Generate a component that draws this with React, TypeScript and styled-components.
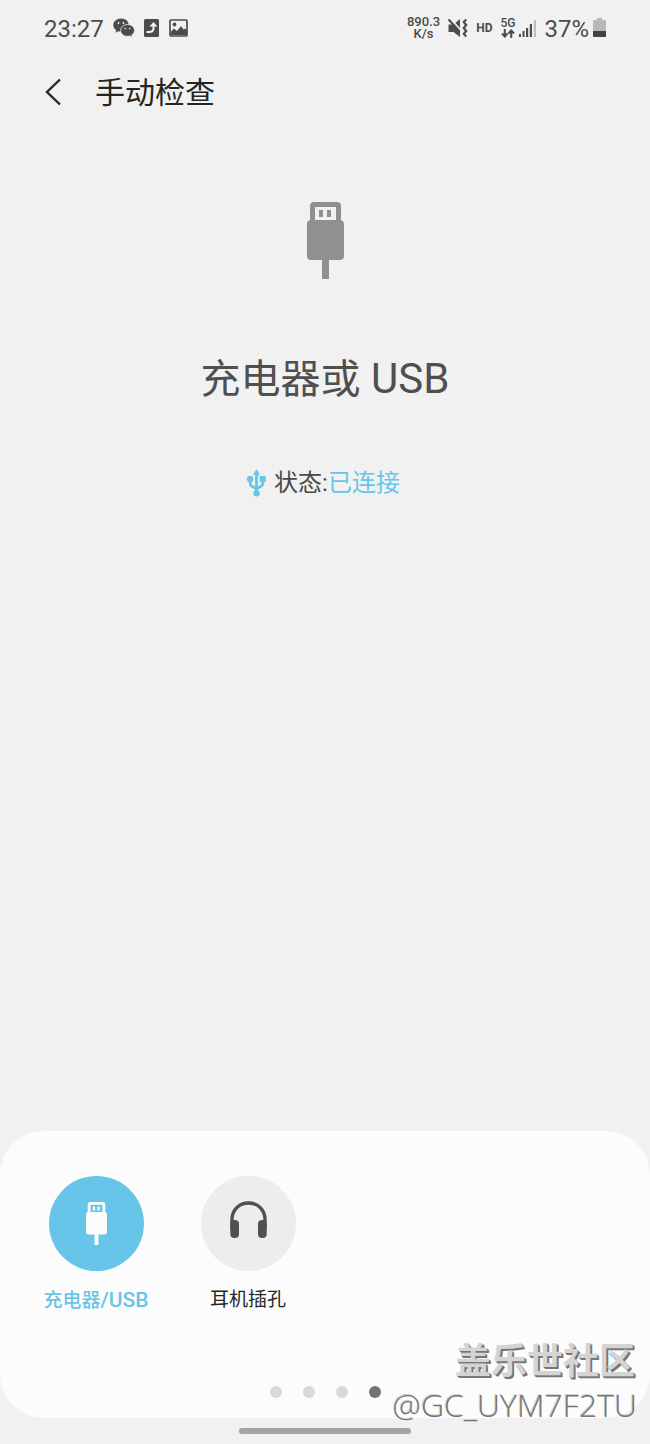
import React from 'react';
import styled, { createGlobalStyle } from 'styled-components';

const GlobalStyle = createGlobalStyle`
  * { box-sizing: border-box; }
  body {
    margin: 0;
    background: #f1f1f1;
    color: #4a4a4a;
    font-family: Roboto, "Noto Sans CJK SC", sans-serif;
  }
  button { font: inherit; color: inherit; border: 0; padding: 0; background: none; cursor: pointer; }
  svg { display: block; flex: none; }
`;

const Screen = styled.div`
  position: relative;
  display: flex;
  flex-direction: column;
  min-height: 100vh;
`;

const StatusBar = styled.header`
  display: flex;
  align-items: center;
  justify-content: space-between;
  height: 56px;
  padding: 0 44px;
`;

const StatusGroup = styled.div<{ $gap: number }>`
  display: flex;
  align-items: center;
  gap: ${(p) => p.$gap}px;
`;

const StatusText = styled.span`
  padding-top: 2px;
  font-size: 24px;
  line-height: 28px;
  color: #4c4c4c;
`;

const SmallStack = styled.span`
  display: flex;
  flex-direction: column;
  align-items: center;
  font-size: 13px;
  line-height: 12px;
  font-weight: 500;
`;

const SmallText = styled.span`
  font-size: 12px;
  line-height: 12px;
  font-weight: 700;
`;

const Network = styled.span`
  display: flex;
  flex-direction: column;
  align-items: center;
  gap: 1px;
  font-size: 12px;
  line-height: 10px;
  font-weight: 500;
`;

const TitleBar = styled.nav`
  display: flex;
  align-items: center;
  gap: 33px;
  height: 72px;
  padding: 0 44px;
`;

const BackButton = styled.button`
  display: flex;
`;

const PageTitle = styled.h1`
  margin: 0;
  padding-top: 2px;
  font-size: 30px;
  line-height: 44px;
  font-weight: 400;
  color: #252525;
`;

const Content = styled.main`
  display: flex;
  flex: 1;
  flex-direction: column;
  align-items: center;
  padding: 74px 24px 40px;
`;

const Heading = styled.h2`
  margin: 70px 0 0;
  font-size: 40px;
  line-height: 60px;
  font-weight: 400;
  color: #4f4f4f;
`;

const HeadingLatin = styled.span`
  font-size: 42px;
`;

const State = styled.p`
  display: flex;
  align-items: center;
  gap: 8px;
  margin: 55px 0 0;
  padding-right: 3px;
  font-size: 24px;
  line-height: 36px;
`;

const Accent = styled.span`
  color: #66c5e9;
`;

const Panel = styled.section`
  display: flex;
  flex-direction: column;
  justify-content: space-between;
  min-height: 287px;
  padding: 45px 20px 20px;
  border-radius: 44px;
  background: #fcfcfc;
`;

const Options = styled.div`
  display: flex;
`;

const Option = styled.button<{ $active?: boolean }>`
  display: flex;
  flex-direction: column;
  align-items: center;
  gap: 15px;
  width: 152px;
  font-size: 19px;
  line-height: 28px;
  font-weight: ${(p) => (p.$active ? 500 : 400)};
  color: ${(p) => (p.$active ? '#66c5e9' : '#252525')};
`;

const OptionLatin = styled.span`
  font-size: 21px;
`;

const Disc = styled.span<{ $active?: boolean }>`
  display: flex;
  align-items: center;
  justify-content: center;
  width: 95px;
  height: 95px;
  border-radius: 50%;
  background: ${(p) => (p.$active ? '#66c5e9' : '#ededed')};
`;

const Pager = styled.div`
  display: flex;
  justify-content: center;
  gap: 21px;
`;

const Dot = styled.button<{ $active?: boolean }>`
  width: 12px;
  height: 12px;
  border-radius: 50%;
  background: ${(p) => (p.$active ? '#737373' : '#d9d9d9')};
`;

const HomeArea = styled.footer`
  display: flex;
  justify-content: center;
  height: 26px;
  padding-top: 10px;
`;

const HomeBar = styled.span`
  width: 172px;
  height: 6px;
  border-radius: 3px;
  background: #a4a4a4;
`;

const Watermark = styled.div`
  position: absolute;
  right: 13px;
  bottom: 16px;
  display: flex;
  flex-direction: column;
  align-items: flex-end;
  pointer-events: none;
`;

const Community = styled.span`
  padding-right: 2px;
  font-family: "Noto Sans CJK SC", sans-serif;
  font-size: 36px;
  line-height: 48px;
  font-weight: 700;
  color: #d4d4d4;
  text-shadow: 1px 1px 0 #777777, 2px 2px 0 #777777;
`;

const Handle = styled.span`
  font-family: "Open Sans", "Noto Sans", sans-serif;
  font-size: 32px;
  line-height: 46px;
  font-weight: 300;
  color: #747474;
  text-shadow: -1px -1px 0 #d4d4d4;
`;

const UsbPlug = ({ width, height, color, hole }: { width: number; height: number; color: string; hole: string }) => (
  <svg width={width} height={height} viewBox="0 0 37 77" preserveAspectRatio="none" aria-hidden="true">
    <path fill={color} d="M7 0h23q4 0 4 4v14q3 1 3 4v32q0 4-4 4H22v19h-7V58H4q-4 0-4-4V22q0-3 3-4V4q0-4 4-4Z" />
    <path fill={hole} d="M8 5h21v13H8z" />
    <path fill={color} d="M12 8h4v7h-4zM20 8h4v7h-4z" />
  </svg>
);

const WeChat = () => (
  <svg width="22" height="20" viewBox="0 0 22 20" aria-hidden="true">
    <path fill="#4c4c4c" d="M8 .5C3.500.5.3 3.500.3 7c0 2.200 1.100 4 2.900 5.200l-.7 2.500 2.800-1.500c.9.300 1.800.4 2.700.4 4.500 0 7.700-2.900 7.700-6.600S12.500.5 8 .5Z" />
    <path fill="#4c4c4c" stroke="#f1f1f1" strokeWidth=".8" d="M14.500 6.500c-3.900 0-6.900 2.600-6.900 5.900s3 5.900 6.900 5.900c.8 0 1.600-.1 2.300-.3l2.500 1.400-.6-2.300c1.700-1.100 2.800-2.700 2.800-4.700 0-3.300-3.100-5.900-7-5.900Z" />
    <g fill="#f1f1f1"><circle cx="5.500" cy="5" r=".9" /><circle cx="10.500" cy="5" r=".9" /><circle cx="12.200" cy="10.500" r=".8" /><circle cx="16.800" cy="10.500" r=".8" /></g>
  </svg>
);

const Transfer = () => (
  <svg width="16" height="18" viewBox="0 0 16 18" aria-hidden="true">
    <rect width="15" height="18" rx="1.500" fill="#4c4c4c" />
    <path fill="none" stroke="#f1f1f1" strokeWidth="2" d="M2.500 13h2.800c3 0 4.200-1.500 4.200-4V6" />
    <path fill="#f1f1f1" d="m9.500 3 4 4.500h-8z" />
  </svg>
);

const Picture = () => (
  <svg width="19" height="18" viewBox="0 0 19 18" aria-hidden="true">
    <rect x="1" y="1" width="17" height="16" rx="1" fill="none" stroke="#4c4c4c" strokeWidth="1.700" />
    <circle cx="5.500" cy="5.500" r="1.900" fill="#4c4c4c" />
    <path fill="#4c4c4c" d="M2 12.500 5 9.500l3 2.500 4-5 2.500 3.500 1.500-1 2 2V16H2z" />
  </svg>
);

const Muted = () => (
  <svg width="20" height="20" viewBox="0 0 20 20" aria-hidden="true">
    <path fill="#4c4c4c" d="M.5 6.500h5L12 1v18l-6.500-5h-5z" />
    <path stroke="#f1f1f1" strokeWidth="1.800" d="m2 0 11 12.500" />
    <path stroke="#4c4c4c" strokeWidth="2" d="m.7 1.500 11 12.500" />
    <path fill="none" stroke="#4c4c4c" strokeWidth="2.200" d="m18.200 1.500-2.400 2.500 2.400 3-2.400 3 2.400 3-2.400 3 2.400 2.500" />
  </svg>
);

const Arrows = () => (
  <svg width="14" height="9" viewBox="0 0 14 9" aria-hidden="true">
    <path fill="none" stroke="#4c4c4c" strokeWidth="2" d="M3.800 0v7M1 4.500l2.800 3 2.800-3M10.200 9V2M7.400 4.500l2.800-3 2.800 3" />
  </svg>
);

const Signal = () => (
  <svg width="17" height="18" viewBox="0 0 17 18" aria-hidden="true">
    <path fill="#4c4c4c" d="M0 15h2v3H0zM3.500 12h2v6h-2zM7 9h2.200v9H7zM10.800 5H13v13h-2.200z" />
    <path fill="#bdbdbd" d="M14.800 1H17v17h-2.200z" />
  </svg>
);

const Battery = () => (
  <svg width="13" height="20" viewBox="0 0 13 20" aria-hidden="true">
    <path fill="#b8b8b8" d="M4 0h5v2h3q1 0 1 1v10H0V3q0-1 1-1h3z" />
    <path fill="#424242" d="M0 13h13v5q0 1-1 1H1q-1 0-1-1z" />
  </svg>
);

const UsbSymbol = () => (
  <svg width="19" height="28" viewBox="0 0 19 28" aria-hidden="true">
    <path fill="none" stroke="#66c5e9" strokeWidth="2.800" d="M9.500 5v18M3.200 10v4.500q0 2 2 3l4.300 2 4.300-2q2-1 2-3V10" />
    <path fill="#66c5e9" d="m9.500 0 3.500 6H6zM12.700 7h6v6h-6z" />
    <circle cx="3.200" cy="10" r="3.200" fill="#66c5e9" />
    <circle cx="9.500" cy="24.200" r="3.200" fill="#66c5e9" />
  </svg>
);

const Headphones = () => (
  <svg width="37" height="45" viewBox="0 0 37 45" aria-hidden="true">
    <path fill="none" stroke="#505050" strokeWidth="3.400" d="M2 29V18.500C2 9 9 2 18.500 2S35 9 35 18.500V29" />
    <rect x=".3" y="19" width="8.700" height="18" rx="4" fill="#505050" />
    <rect x="28" y="19" width="8.700" height="18" rx="4" fill="#505050" />
  </svg>
);

const PAGES = [1, 2, 3, 4];

export default function App() {
  return (
    <Screen>
      <GlobalStyle />
      <StatusBar>
        <StatusGroup $gap={9}>
          <StatusText>23:27</StatusText>
          <WeChat />
          <Transfer />
          <Picture />
        </StatusGroup>
        <StatusGroup $gap={8}>
          <SmallStack><span>890.3</span><span>K/s</span></SmallStack>
          <Muted />
          <SmallText>HD</SmallText>
          <StatusGroup $gap={4}>
            <Network>5G<Arrows /></Network>
            <Signal />
          </StatusGroup>
          <StatusGroup $gap={4}>
            <StatusText>37%</StatusText>
            <Battery />
          </StatusGroup>
        </StatusGroup>
      </StatusBar>
      <TitleBar>
        <BackButton aria-label="返回">
          <svg width="18" height="28" viewBox="0 0 18 28" aria-hidden="true">
            <path fill="none" stroke="#252525" strokeWidth="2.400" d="M16 1.500 3 14l13 12.500" />
          </svg>
        </BackButton>
        <PageTitle>手动检查</PageTitle>
      </TitleBar>
      <Content>
        <UsbPlug width={37} height={77} color="#909090" hole="#f1f1f1" />
        <Heading>充电器或<HeadingLatin> USB</HeadingLatin></Heading>
        <State>
          <UsbSymbol />
          <span>状态:<Accent>已连接</Accent></span>
        </State>
      </Content>
      <Panel>
        <Options>
          <Option $active>
            <Disc $active><UsbPlug width={21} height={43} color="#fcfcfc" hole="#66c5e9" /></Disc>
            <span>充电器<OptionLatin>/USB</OptionLatin></span>
          </Option>
          <Option>
            <Disc><Headphones /></Disc>
            <span>耳机插孔</span>
          </Option>
        </Options>
        <Pager>
          {PAGES.map((page) => (
            <Dot key={page} $active={page === 4} aria-label={`第 ${page} 页`} />
          ))}
        </Pager>
      </Panel>
      <HomeArea><HomeBar /></HomeArea>
      <Watermark>
        <Community>盖乐世社区</Community>
        <Handle>@GC_UYM7F2TU</Handle>
      </Watermark>
    </Screen>
  );
}
